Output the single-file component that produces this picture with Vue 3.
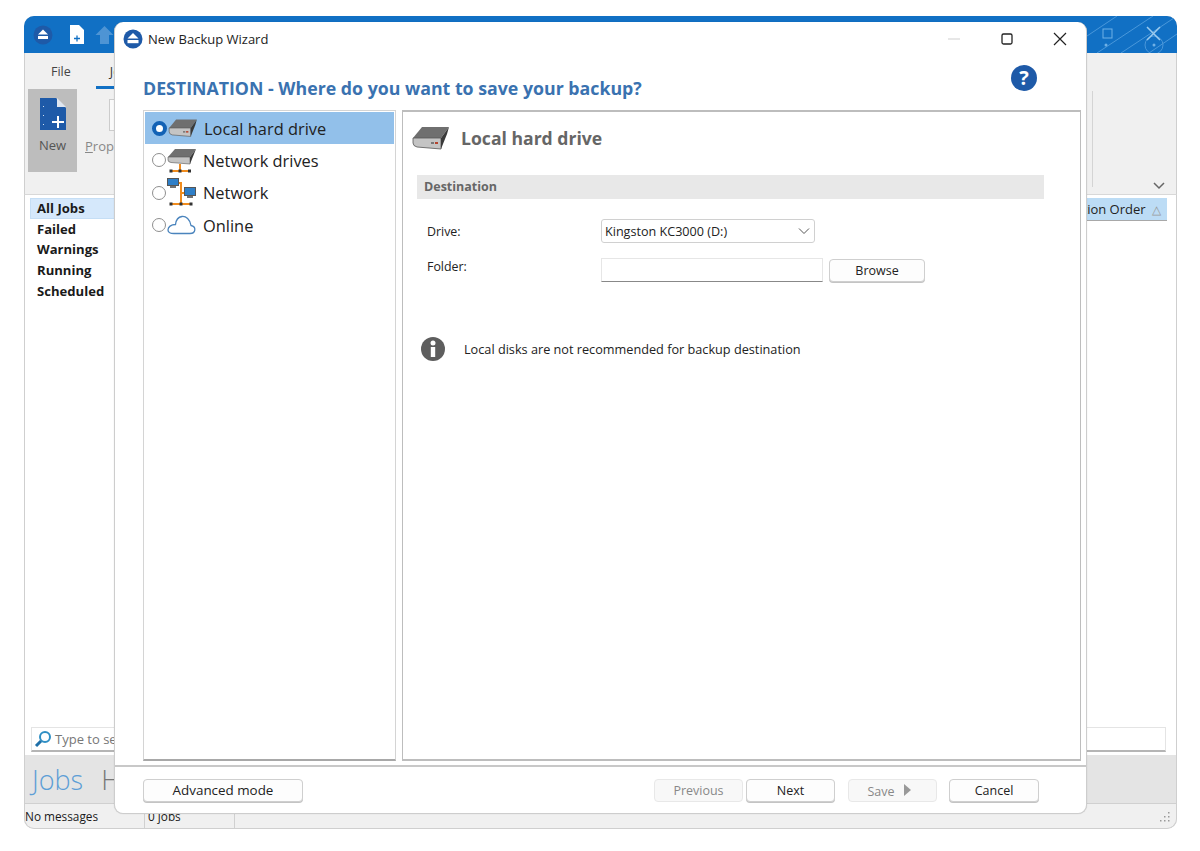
<script setup>
const sidebarItems = ['All Jobs', 'Failed', 'Warnings', 'Running', 'Scheduled'];
const destinations = [
  { label: 'Local hard drive', icon: 'drive', selected: true },
  { label: 'Network drives', icon: 'netdrive' },
  { label: 'Network', icon: 'network' },
  { label: 'Online', icon: 'cloud' }
];
</script>

<template>
  <div class="page">
    <div class="app-window">
      <div class="app-titlebar">
        <svg class="qa" viewBox="0 0 20 20" width="20" height="20"><circle cx="10" cy="10" r="9.500" fill="#1e5aa8"/><path d="M10 4.500 15 9.500H5Z" fill="#fff"/><rect x="5" y="11" width="10" height="3" fill="#fff"/></svg>
        <svg class="qa doc" viewBox="0 0 15 19" width="15" height="19"><path d="M1 0H10L15 5V19H1Z" fill="#fff"/><path d="M5 13.500H11M8 10.500V16.500" stroke="#1170c4" stroke-width="1.300"/></svg>
        <svg class="qa up" viewBox="0 0 19 19" width="19" height="19"><path d="M9.500 1 18.500 10H14V19H5V10H.5Z" fill="#4e94d4"/></svg>
        <svg class="title-deco" viewBox="0 0 90 37" width="90" height="37">
          <g stroke="#4a97da" stroke-width="1" fill="none">
            <path d="M0 20 30 0M10 37 66 0M34 37 90 0M62 37 90 18"/>
            <circle cx="67" cy="29" r="9"/>
          </g>
          <rect x="16" y="13" width="9" height="9" fill="none" stroke="#6fb0e6"/>
          <circle cx="19" cy="29" r="1.500" fill="#6fb0e6"/>
          <circle cx="67" cy="29" r="1.500" fill="#6fb0e6"/>
          <path d="M60 11 73 24M73 11 60 24" stroke="#9ccbef" stroke-width="1.500"/>
        </svg>
      </div>

      <div class="ribbon">
        <div class="ribbon-tabs">
          <span class="tab">File</span>
          <span class="tab active">Jobs</span>
        </div>
        <div class="ribbon-tools">
          <div class="tool-new">
            <svg viewBox="0 0 28 34" width="28" height="34">
              <path d="M1 1H17L27 11V33H1Z" fill="#1e5aa8"/>
              <path d="M18 1 27 10H18Z" fill="#dfe6f0"/>
              <path d="M13 25H25M19 19V31" stroke="#fff" stroke-width="2"/>
              <g fill="#cfe0f2"><rect x="4" y="9" width="1" height="1"/><rect x="4" y="18" width="1" height="1"/><rect x="4" y="27" width="1" height="1"/></g>
            </svg>
            <span>New</span>
          </div>
          <div class="tool-prop">
            <span class="prop-icon"></span>
            <span><u>P</u>rop</span>
          </div>
          <div class="ribbon-divider"></div>
        </div>
        <svg class="ribbon-chevron" viewBox="0 0 12 8" width="12" height="8"><path d="M1 1 6 6 11 1" fill="none" stroke="#666" stroke-width="1.500"/></svg>
      </div>

      <div class="app-body">
        <ul class="side-list">
          <li v-for="(item, i) in sidebarItems" :key="item" :class="{ current: i === 0 }">{{ item }}</li>
        </ul>
        <div class="col-head">tion Order <span class="sort">△</span></div>
      </div>

      <div class="search-row">
        <div class="search-box">
          <svg viewBox="0 0 18 18" width="18" height="18"><circle cx="11" cy="7" r="5" fill="none" stroke="#2f8fc4" stroke-width="2"/><path d="M7 11 2 16" stroke="#1e6fa8" stroke-width="3"/></svg>
          <span>Type to se</span>
        </div>
      </div>
      <div class="jobs-strip"><span class="big">Jobs</span><span class="big grey">H</span></div>
      <div class="statusbar">
        <span class="cell first">No messages</span>
        <span class="cell second">0 jobs</span>
        <svg class="grip" viewBox="0 0 12 12" width="12" height="12"><g fill="#999"><rect x="9" y="1" width="1.500" height="1.500"/><rect x="5" y="5" width="1.500" height="1.500"/><rect x="9" y="5" width="1.500" height="1.500"/><rect x="1" y="9" width="1.500" height="1.500"/><rect x="5" y="9" width="1.500" height="1.500"/><rect x="9" y="9" width="1.500" height="1.500"/></g></svg>
      </div>

      <!-- wizard floats over the main window -->
      <div class="wizard">
        <div class="wiz-title">
          <svg viewBox="0 0 20 20" width="20" height="20"><circle cx="10" cy="10" r="9.500" fill="#1e5aa8"/><path d="M10 4 15.500 9.500H4.500Z" fill="#fff"/><rect x="4.500" y="11" width="11" height="3.200" fill="#fff"/></svg>
          <span class="wiz-name">New Backup Wizard</span>
          <div class="win-btns">
            <svg viewBox="0 0 14 14" width="14" height="14"><path d="M1 7H13" stroke="#cfcfcf"/></svg>
            <svg viewBox="0 0 14 14" width="14" height="14"><rect x="2" y="2" width="10" height="10" rx="1.500" fill="none" stroke="#222" stroke-width="1.300"/></svg>
            <svg viewBox="0 0 14 14" width="14" height="14"><path d="M1 1 13 13M13 1 1 13" stroke="#222" stroke-width="1.200"/></svg>
          </div>
        </div>

        <div class="wiz-head">
          <h1>DESTINATION - Where do you want to save your backup?</h1>
          <span class="help">?</span>
        </div>

        <div class="panes">
          <div class="left-pane">
            <div v-for="d in destinations" :key="d.label" class="dest" :class="{ selected: d.selected }">
              <span class="radio"></span>
              <span class="dest-icon">
                <svg v-if="d.icon === 'drive'" viewBox="0 0 38 26" width="30" height="20">
                  <path d="M10 2H37L29 13H1Z" fill="#6f6f6f"/>
                  <path d="M1 13H29V24L5 22Q1 21 1 18Z" fill="#c4c4c4" stroke="#555" stroke-width=".8"/>
                  <path d="M37 2 35 9 29 24V13Z" fill="#3a3a3a"/>
                  <rect x="19" y="17" width="3" height="2" fill="#777"/><rect x="23" y="17" width="3" height="2" fill="#b5442e"/>
                </svg>
                <svg v-else-if="d.icon === 'netdrive'" viewBox="0 0 30 26" width="30" height="26">
                  <path d="M8 2H29L23 10H1Z" fill="#6f6f6f"/>
                  <path d="M1 10H23V17L4 15.500Q1 15 1 13Z" fill="#c4c4c4" stroke="#555" stroke-width=".6"/>
                  <path d="M29 2 27 7 23 17V10Z" fill="#3a3a3a"/>
                  <path d="M13 17V24M4 24H23" stroke="#f08c1e" stroke-width="2"/>
                  <rect x="2.500" y="22.500" width="3" height="3" fill="#333"/><rect x="11.500" y="22.500" width="3" height="3" fill="#333"/><rect x="21" y="22.500" width="3" height="3" fill="#333"/>
                </svg>
                <svg v-else-if="d.icon === 'network'" viewBox="0 0 30 30" width="30" height="30">
                  <path d="M10 5H14V26M4 26H24M14 15H18" stroke="#f08c1e" stroke-width="2" fill="none"/>
                  <rect x=".5" y=".5" width="11" height="7" fill="#2f7fc8" stroke="#555"/>
                  <rect x="17.500" y="9.500" width="11" height="8" fill="#2f7fc8" stroke="#555"/>
                  <path d="M20 19H26M3 9H9" stroke="#444" stroke-width="1.500"/>
                  <rect x="2.500" y="24.500" width="3" height="3" fill="#333"/><rect x="12.500" y="24.500" width="3" height="3" fill="#333"/><rect x="22.500" y="24.500" width="3" height="3" fill="#333"/>
                </svg>
                <svg v-else viewBox="0 0 30 20" width="30" height="20">
                  <path d="M7 18.500H23C29 18.500 29.500 11.500 24 10.500C23 4.500 19 1 15 1.500C11 2 9 5 8.500 9.500C4 9.500 1 12 1 15C1 17.500 3 18.500 7 18.500Z" fill="#fff" stroke="#4a84bd" stroke-width="1.300"/>
                </svg>
              </span>
              <span class="dest-label">{{ d.label }}</span>
            </div>
          </div>

          <div class="right-pane">
            <div class="pane-title">
              <svg viewBox="0 0 38 26" width="38" height="26">
                <path d="M10 2H37L29 13H1Z" fill="#6f6f6f"/>
                <path d="M1 13H29V24L5 22Q1 21 1 18Z" fill="#c4c4c4" stroke="#555" stroke-width=".8"/>
                <path d="M37 2 35 9 29 24V13Z" fill="#3a3a3a"/>
                <rect x="19" y="17" width="3" height="2" fill="#777"/><rect x="23" y="17" width="3" height="2" fill="#b5442e"/>
              </svg>
              <span>Local hard drive</span>
            </div>
            <div class="section-bar">Destination</div>
            <div class="form-row drive-row">
              <label>Drive:</label>
              <div class="select">Kingston KC3000 (D:)
                <svg viewBox="0 0 12 8" width="12" height="8"><path d="M1 1.500 6 6.500 11 1.500" fill="none" stroke="#555"/></svg>
              </div>
            </div>
            <div class="form-row folder-row">
              <label>Folder:</label>
              <div class="text-input"></div>
              <button class="btn browse">Browse</button>
            </div>
            <div class="notice">
              <svg viewBox="0 0 24 24" width="24" height="24"><circle cx="12" cy="12" r="12" fill="#5e5e5e"/><circle cx="12" cy="6" r="2.500" fill="#fff"/><rect x="9.800" y="10" width="4.400" height="10" fill="#fff"/></svg>
              <span>Local disks are not recommended for backup destination</span>
            </div>
          </div>
        </div>

        <div class="wiz-footer">
          <button class="btn adv">Advanced mode</button>
          <div class="foot-right">
            <button class="btn nav disabled">Previous</button>
            <button class="btn nav">Next</button>
            <button class="btn nav disabled save"><span>Save</span> <svg viewBox="0 0 7 12" width="7" height="12"><path d="M0 0 7 6 0 12Z" fill="#999"/></svg></button>
            <button class="btn nav cancel">Cancel</button>
          </div>
        </div>
      </div>
    </div>
  </div>
</template>

<style>
html, body { background: #fff; }
</style>

<style scoped>
.page {
  width: 1200px;
  height: 851px;
  padding: 16px 23px 22px 24px;
  box-sizing: border-box;
  font-family: "Open Sans", "Noto Sans", sans-serif;
  color: #1a1a1a;
  overflow: hidden;
}

.app-window {
  position: relative;
  height: 100%;
  display: flex;
  flex-direction: column;
  border-radius: 10px;
  box-shadow: inset 0 0 0 1px #cfcfcf;
  background: #fff;
  overflow: hidden;
}

.app-titlebar {
  height: 37px;
  flex: none;
  background: #1170c4;
  display: flex;
  align-items: center;
  padding-left: 9px;
  position: relative;
}
.qa { flex: none; }
.doc { margin-left: 16px; }
.up { margin-left: 11px; }
.title-deco { position: absolute; right: 0; top: 0; }

.ribbon {
  height: 142px;
  flex: none;
  background: #f0f0f0;
  border-bottom: 1px solid #d8d8d8;
  box-sizing: border-box;
  position: relative;
  border-left: 1px solid #cfcfcf;
  border-right: 1px solid #cfcfcf;
}
.ribbon-tabs { display: flex; gap: 25px; padding: 10px 0 0 26px; font-size: 12.500px; }
.tab { color: #444; height: 23px; }
.tab.active { color: #333; border-bottom: 3px solid #1170c4; padding: 0 17px 0 14px; }
.ribbon-tools { display: flex; padding: 0 0 0 3px; }
.tool-new {
  width: 49px;
  height: 83px;
  background: #bdbdbd;
  display: flex;
  flex-direction: column;
  align-items: center;
  padding-top: 8px;
  box-sizing: border-box;
  font-size: 13px;
  color: #555;
  gap: 5px;
}
.tool-prop {
  display: flex;
  flex-direction: column;
  align-items: flex-start;
  padding: 10px 0 0 8px;
  font-size: 13px;
  color: #888;
  gap: 6px;
}
.prop-icon { width: 28px; height: 30px; margin-left: 24px; border: 1px solid #ccc; background: #fafafa; }
.ribbon-divider { position: absolute; right: 83px; top: 38px; width: 1px; height: 96px; background: #d4d4d4; }
.ribbon-chevron { position: absolute; right: 11px; top: 129px; }

.app-body {
  flex: 1;
  position: relative;
  display: flex;
  justify-content: space-between;
  align-items: flex-start;
  padding: 3px 9px 0 5px;
  min-height: 0;
  border-left: 1px solid #cfcfcf;
  border-right: 1px solid #cfcfcf;
}
.side-list { list-style: none; margin: 0; padding: 0; width: 85px; font-size: 13.100px; font-weight: 700; }
.side-list li { height: 20.700px; line-height: 20px; padding-left: 7px; white-space: nowrap; }
.side-list li.current { background: #d5e8fb; box-shadow: inset 0 0 0 1px #c5def5; }
.col-head {
  width: 220px;
  height: 23px;
  line-height: 22px;
  background: #bcdcf5;
  border-bottom: 1px solid #a8a8a8;
  box-sizing: border-box;
  text-align: right;
  padding-right: 6px;
  font-size: 13px;
  color: #222;
}
.sort { color: #999; font-size: 12px; margin-left: 3px; }

.search-row { flex: none; padding: 0 10px 3px 6px; border-left: 1px solid #cfcfcf; border-right: 1px solid #cfcfcf; }
.search-box {
  height: 25px;
  border: 1px solid #e4e4e4;
  border-bottom: 2px solid #b5b5b5;
  box-sizing: border-box;
  display: flex;
  align-items: center;
  gap: 3px;
  padding-left: 2px;
  font-size: 13px;
  color: #777;
}
.jobs-strip {
  height: 48px;
  flex: none;
  background: #e4e4e4;
  display: flex;
  gap: 18px;
  align-items: center;
  padding-left: 7px;
  border-left: 1px solid #cfcfcf;
  border-right: 1px solid #cfcfcf;
  box-sizing: border-box;
}
.big { font-size: 27px; font-weight: 300; color: #5d9ed6; }
.big.grey { color: #777; }
.statusbar {
  height: 26px;
  flex: none;
  background: #f0f0f0;
  border-top: 1px solid #d0d0d0;
  display: flex;
  align-items: center;
  font-size: 11.800px;
  position: relative;
  box-sizing: border-box;
  border-left: 1px solid #cfcfcf;
  border-right: 1px solid #cfcfcf;
  border-bottom: 1px solid #cfcfcf;
  border-radius: 0 0 10px 10px;
}
.cell { height: 100%; display: flex; align-items: center; border-right: 1px solid #d0d0d0; box-sizing: border-box; }
.cell.first { width: 120px; }
.cell.second { width: 90px; padding-left: 3px; }
.grip { position: absolute; right: 5px; bottom: 5px; }

.wizard {
  position: absolute;
  left: 90px;
  top: 6px;
  width: 973px;
  height: 792px;
  box-sizing: border-box;
  background: #fff;
  border: 1px solid #cdcdcd;
  border-top: none;
  border-radius: 9px;
  display: flex;
  flex-direction: column;
  box-shadow: 0 0 1px rgba(0, 0, 0, 0.2);
}
.wiz-title {
  height: 33px;
  flex: none;
  display: flex;
  align-items: center;
  padding-left: 8px;
  gap: 5px;
  font-size: 13px;
}
.wiz-name { color: #222; padding-top: 1px; }
.win-btns { margin-left: auto; display: flex; gap: 39px; padding-right: 19px; }

.wiz-head {
  height: 55px;
  flex: none;
  position: relative;
  display: flex;
  align-items: flex-end;
  padding: 0 0 10px 28px;
  box-sizing: border-box;
}
.wiz-head h1 { margin: 0; font-size: 17.750px; font-weight: 700; color: #3a72b0; line-height: 24px; }
.help {
  position: absolute;
  right: 49px;
  top: 10px;
  width: 26px;
  height: 26px;
  border-radius: 50%;
  background: #1e5aa8;
  color: #fff;
  font-weight: 700;
  font-size: 20px;
  line-height: 26px;
  text-align: center;
}

.panes { display: flex; flex: 1; min-height: 0; gap: 6px; padding: 0 5px 0 28px; }
.left-pane { width: 253px; box-sizing: border-box; border: 1px solid #d4d4d4; border-bottom: 2px solid #a8a8a8; padding: 1px; }
.dest { height: 32.300px; display: flex; align-items: center; padding-left: 7px; font-size: 16.400px; }
.dest.selected { background: #92c0ea; }
.radio { width: 12px; height: 12px; border-radius: 50%; border: 1.500px solid #8f8f8f; background: #fff; flex: none; }
.selected .radio { border: 4px solid #1362b5; width: 7px; height: 7px; }
.dest-icon { width: 30px; margin-left: 1px; display: flex; justify-content: center; flex: none; }
.dest-label { margin-left: 6px; color: #222; }

.right-pane { flex: 1; box-sizing: border-box; border: 1px solid #bdbdbd; border-bottom-width: 2px; border-top-width: 2px; padding-left: 9px; position: relative; }
.pane-title { height: 52px; display: flex; align-items: center; gap: 11px; font-size: 17.600px; font-weight: 700; color: #666; }
.section-bar {
  margin: 11px 36px 0 5px;
  height: 24px;
  line-height: 23px;
  background: #e8e8e8;
  padding-left: 7px;
  font-size: 12.500px;
  font-weight: 700;
  color: #666;
}
.form-row { display: flex; align-items: center; padding-left: 15px; }
.form-row label { width: 174px; font-size: 12.400px; color: #222; flex: none; }
.drive-row { margin-top: 20px; height: 24px; }
.folder-row { margin-top: 15px; height: 24px; }
.folder-row label { align-self: flex-start; line-height: 18px; }
.select {
  width: 214px;
  height: 24px;
  border: 1px solid #d0d0d0;
  border-radius: 3px;
  box-sizing: border-box;
  display: flex;
  align-items: center;
  justify-content: space-between;
  padding: 0 4px 0 3px;
  font-size: 12.600px;
  color: #222;
}
.text-input { width: 222px; height: 24px; box-sizing: border-box; border: 1px solid #e6e6e6; border-bottom: 1px solid #888; }
.btn {
  font-family: inherit;
  background: #fdfdfd;
  border: 1px solid #cfcfcf;
  border-radius: 4px;
  color: #222;
  font-size: 12.500px;
  padding: 0;
  height: 23px;
  box-shadow: 0 1px 0 #c4c4c4;
}
.browse { width: 96px; margin-left: 6px; }
.notice { display: flex; align-items: center; gap: 19px; margin: 55px 0 0 9px; font-size: 12.700px; color: #222; }

.wiz-footer {
  height: 48px;
  flex: none;
  margin-top: 4px;
  border-top: 2px solid #c8c8c8;
  display: flex;
  align-items: flex-start;
  justify-content: space-between;
  padding: 12px 47px 0 28px;
  box-sizing: border-box;
}
.adv { width: 160px; font-size: 13.400px; padding-bottom: 2px; }
.foot-right { display: flex; gap: 3px; }
.nav { width: 89px; }
.nav.disabled { color: #888; background: #f8f8f8; border-color: #e8e8e8; box-shadow: none; }
.save { margin-left: 10px; display: inline-flex; align-items: center; justify-content: center; gap: 9px; padding: 1px 7px 0 0; }
.save svg { margin-top: -2px; }
.cancel { margin-left: 9px; width: 90px; }
</style>
